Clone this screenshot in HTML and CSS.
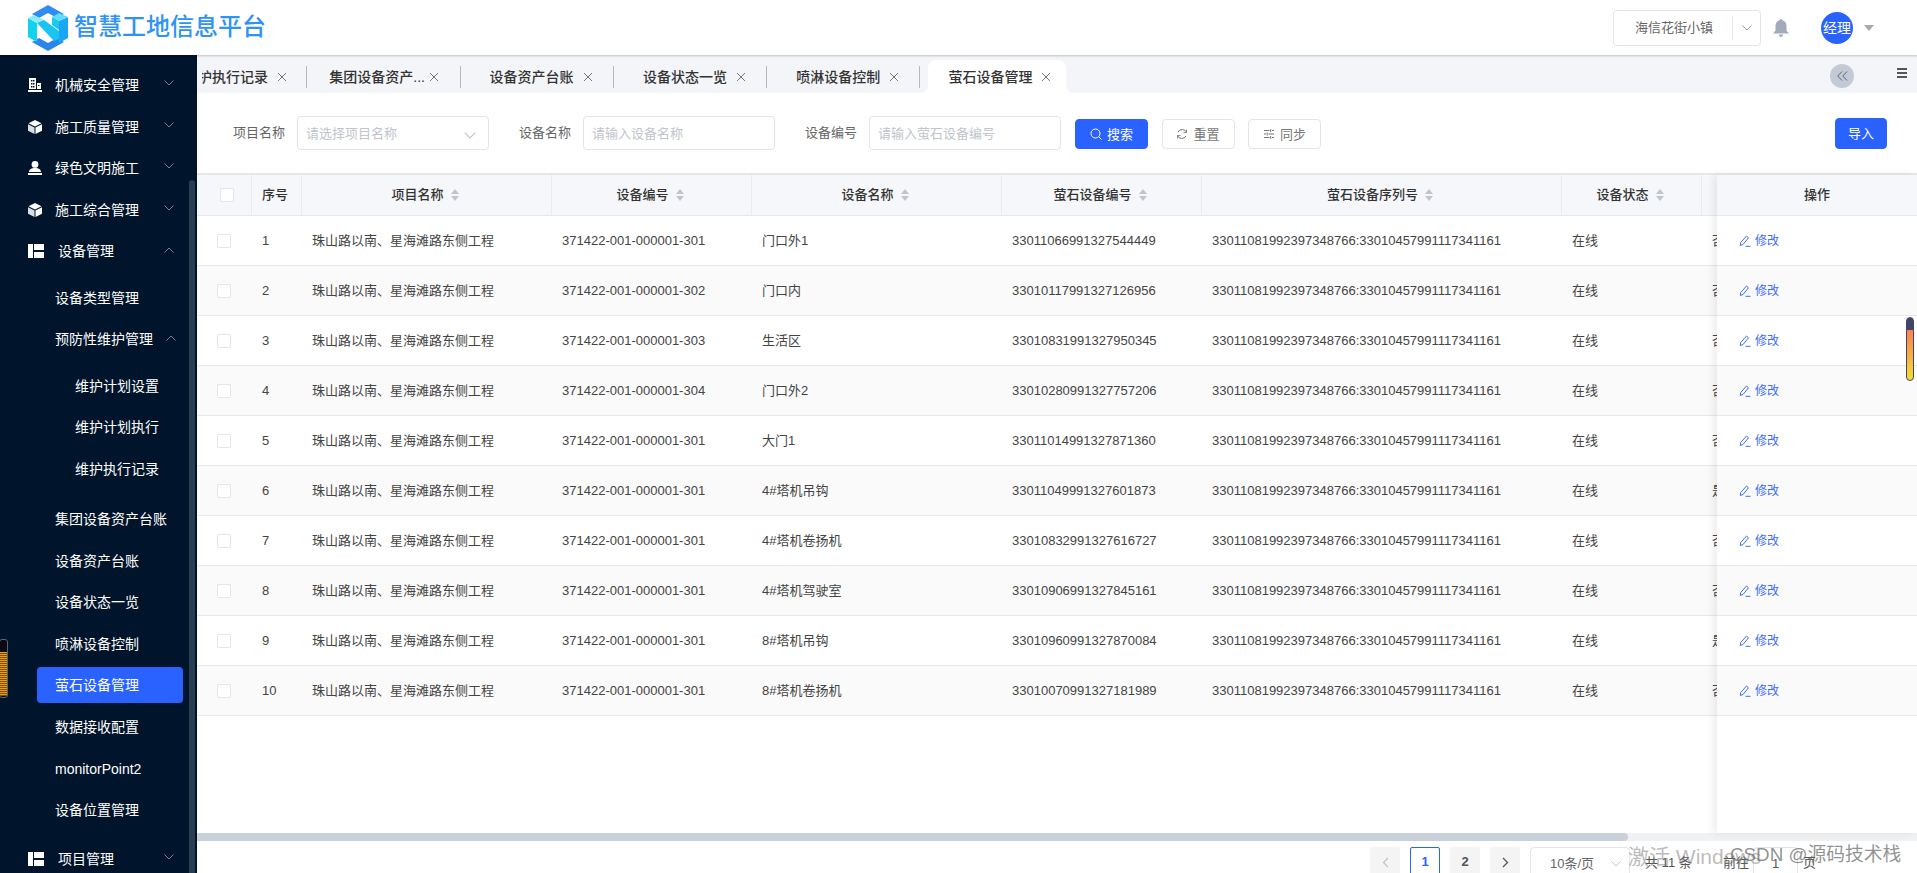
FILE: index.html
```html
<!DOCTYPE html>
<html lang="zh-CN">
<head>
<meta charset="utf-8">
<title>智慧工地信息平台</title>
<link rel="stylesheet" href="styles.css">
</head>
<body>
<svg class="defs" width="0" height="0" aria-hidden="true">
  <symbol id="i-down" viewBox="0 0 10 6"><path d="M.5.5 5 5 9.500.5" fill="none" stroke="currentColor"/></symbol>
  <symbol id="i-up" viewBox="0 0 10 6"><path d="M.5 5.500 5 1l4.500 4.500" fill="none" stroke="currentColor"/></symbol>
  <symbol id="i-x" viewBox="0 0 10 10"><path d="M1 1l8 8M9 1 1 9" fill="none" stroke="currentColor" stroke-width="1"/></symbol>
  <symbol id="i-building" viewBox="0 0 14 14"><path fill="currentColor" d="M1 0h7v11H1zM9 5h4v6H9zM0 12h14v2H0z"/><path fill="#00142b" d="M3 2h1.500v1.500H3zM5 2h1.500v1.500H5zM3 5h1.500v1.500H3zM5 5h1.500v1.500H5zM3 8h1.500v1.500H3zM5 8h1.500v1.500H5zM10 7h1.500v1H10z"/></symbol>
  <symbol id="i-cube" viewBox="0 0 14 14"><path fill="currentColor" d="M7 0l6.500 3.200L7 6.400.5 3.200z"/><path fill="#d8dde6" d="M0 4.200l6.500 3.200V14L0 10.800z"/><path fill="#fff" d="M14 4.200 7.500 7.400V14l6.500-3.200z"/></symbol>
  <symbol id="i-person" viewBox="0 0 14 14"><circle cx="7" cy="3.400" r="3.400" fill="currentColor"/><path fill="currentColor" d="M1 11c0-2.600 2.600-4 6-4s6 1.400 6 4zM0 12h14v2H0z"/></symbol>
  <symbol id="i-panel" viewBox="0 0 16 14"><path fill="currentColor" d="M0 0h5v14H0zM6 0h10v6H6zM6 8h10v6H6z"/></symbol>
  <symbol id="i-sort" viewBox="0 0 8 12"><path fill="currentColor" d="M4 0l4 5H0zM4 12 0 7h8z"/></symbol>
  <symbol id="i-edit" viewBox="0 0 12 12"><path d="M7.500 1 9.500 2.800 4 9.500 1.300 10.500 1.600 7.600z" fill="none" stroke="currentColor"/><path d="M6.500 11.300h5" stroke="currentColor" fill="none"/></symbol>
</svg>

<header class="top">
  <svg class="logo" width="42" height="46" viewBox="0 0 42 46" aria-hidden="true">
    <path fill="#2f8cf2" d="M21 0 37 9 30 13 21 8 12 13 5 9z"/>
    <path fill="#2b86ec" d="M21 46 37 37 30 33 21 38 12 33 5 37z"/>
    <path fill="#13d2ee" d="M1 13 10 18V37L1 32z"/>
    <path fill="#8feaf7" d="M1 13 7 10 17 15 10 18z"/>
    <path fill="#18c4f2" d="M10 18 17 15 32 26V34L27 36z"/>
    <path fill="#1aa6f6" d="M32 16 41 12V33L32 38z"/>
    <path fill="#5fdcf6" d="M25 12 32 8 41 12 32 16z"/>
    <path fill="#1cc8f0" d="M25 12 32 16V25L25 20z"/>
  </svg>
  <span class="brand">智慧工地信息平台</span>
  <div class="project-select">
    <span class="project-name">海信花街小镇</span>
    <span class="project-arrow"><svg width="10" height="6"><use href="#i-down"/></svg></span>
  </div>
  <svg class="bell" width="16" height="18" viewBox="0 0 16 18" aria-hidden="true"><path fill="currentColor" d="M8 0c.8 0 1.300.5 1.400 1.200C12 1.900 13.500 4 13.500 7v4.500L16 14.500H0L2.500 11.500V7c0-3 1.500-5.100 4.100-5.800C6.700.5 7.200 0 8 0zM5.800 15.500h4.400C10 17 9.200 18 8 18s-2-1-2.200-2.500z"/></svg>
  <span class="avatar">经理</span>
  <span class="caret"></span>
</header>

<div class="shell">
  <aside class="side">
    <nav class="nav">
      <a class="item"><svg class="ico" width="14" height="14"><use href="#i-building"/></svg>机械安全管理<svg class="chev" width="10" height="6"><use href="#i-down"/></svg></a>
      <a class="item"><svg class="ico" width="14" height="14"><use href="#i-cube"/></svg>施工质量管理<svg class="chev" width="10" height="6"><use href="#i-down"/></svg></a>
      <a class="item"><svg class="ico" width="14" height="14"><use href="#i-person"/></svg>绿色文明施工<svg class="chev" width="10" height="6"><use href="#i-down"/></svg></a>
      <a class="item"><svg class="ico" width="14" height="14"><use href="#i-cube"/></svg>施工综合管理<svg class="chev" width="10" height="6"><use href="#i-down"/></svg></a>
      <a class="item"><svg class="ico-wide" width="16" height="14"><use href="#i-panel"/></svg>设备管理<svg class="chev chev-up" width="10" height="6"><use href="#i-up"/></svg></a>
      <div class="group">
        <a class="sub">设备类型管理</a>
        <a class="sub">预防性维护管理<svg class="chev chev-up" width="10" height="6"><use href="#i-up"/></svg></a>
        <div class="group group-inner">
          <a class="sub sub2">维护计划设置</a>
          <a class="sub sub2">维护计划执行</a>
          <a class="sub sub2">维护执行记录</a>
        </div>
        <a class="sub">集团设备资产台账</a>
        <a class="sub">设备资产台账</a>
        <a class="sub">设备状态一览</a>
        <a class="sub">喷淋设备控制</a>
        <a class="sub active">萤石设备管理</a>
        <a class="sub">数据接收配置</a>
        <a class="sub">monitorPoint2</a>
        <a class="sub">设备位置管理</a>
      </div>
      <a class="item"><svg class="ico-wide" width="16" height="14"><use href="#i-panel"/></svg>项目管理<svg class="chev" width="10" height="6"><use href="#i-down"/></svg></a>
    </nav>
    <span class="side-thumb"></span>
  </aside>

  <main class="main">
    <div class="tabbar">
      <div class="tabs">
        <div class="tab tab-first"><span class="tab-text">维护执行记录</span><svg class="tab-x" width="10" height="10"><use href="#i-x"/></svg></div>
        <div class="tab tab-second"><span class="tab-text tab-clip">集团设备资产...</span><svg class="tab-x" width="10" height="10"><use href="#i-x"/></svg></div>
        <div class="tab"><span class="tab-text">设备资产台账</span><svg class="tab-x" width="10" height="10"><use href="#i-x"/></svg></div>
        <div class="tab"><span class="tab-text">设备状态一览</span><svg class="tab-x" width="10" height="10"><use href="#i-x"/></svg></div>
        <div class="tab"><span class="tab-text">喷淋设备控制</span><svg class="tab-x" width="10" height="10"><use href="#i-x"/></svg></div>
        <div class="tab tab-active"><span class="tab-text">萤石设备管理</span><svg class="tab-x" width="10" height="10"><use href="#i-x"/></svg></div>
      </div>
      <span class="collapse"><svg width="11" height="10" viewBox="0 0 11 10"><path d="M5 .5.8 5 5 9.500M10 .5 5.800 5 10 9.500" fill="none" stroke="currentColor"/></svg></span>
      <span class="burger"><i></i><i></i><i></i></span>
    </div>

    <form class="filter">
      <label class="field"><span class="field-label">项目名称</span><span class="input input-select"><span class="ph">请选择项目名称</span><svg class="input-arrow" width="12" height="7"><use href="#i-down"/></svg></span></label>
      <label class="field"><span class="field-label">设备名称</span><span class="input"><span class="ph">请输入设备名称</span></span></label>
      <label class="field"><span class="field-label">设备编号</span><span class="input"><span class="ph">请输入萤石设备编号</span></span></label>
      <div class="btns">
        <button type="button" class="btn btn-primary"><svg width="12" height="12" viewBox="0 0 12 12"><circle cx="5.500" cy="5.500" r="4.500" fill="none" stroke="currentColor"/><path d="M9 9l2.500 2.500" stroke="currentColor"/></svg><span class="btn-text">搜索</span></button>
        <button type="button" class="btn"><svg width="12" height="12" viewBox="0 0 12 12"><path d="M1.500 7.500A4.700 4.700 0 0 0 10 8M10.500 4.500A4.700 4.700 0 0 0 2 4" fill="none" stroke="currentColor"/><path d="M10.500 1.500v3h-3M1.500 10.500v-3h3" fill="none" stroke="currentColor" stroke-width=".8"/></svg><span class="btn-text">重置</span></button>
        <button type="button" class="btn"><svg width="12" height="12" viewBox="0 0 12 12"><path d="M1 2.500h5.500M9 2.500h2M1 6h2M5.500 6H11M1 9.500h5.500M9 9.500h2" stroke="currentColor" fill="none"/><path d="M7.700 1v3M4.200 4.500v3M7.700 8v3" stroke="currentColor" fill="none"/></svg><span class="btn-text">同步</span></button>
      </div>
      <button type="button" class="btn btn-primary btn-import"><span class="btn-text">导入</span></button>
    </form>

    <section class="table-area">
      <div class="table-clip">
        <table class="grid">
          <colgroup><col class="c0"><col class="c1"><col class="c2"><col class="c3"><col class="c4"><col class="c5"><col class="c6"><col class="c7"><col class="c8"></colgroup>
          <thead>
            <tr>
              <th class="th-check"><span class="check"></span></th>
              <th class="th-left">序号</th>
              <th><span class="th-in">项目名称<svg class="sort" width="8" height="12"><use href="#i-sort"/></svg></span></th>
              <th><span class="th-in">设备编号<svg class="sort" width="8" height="12"><use href="#i-sort"/></svg></span></th>
              <th><span class="th-in">设备名称<svg class="sort" width="8" height="12"><use href="#i-sort"/></svg></span></th>
              <th><span class="th-in">萤石设备编号<svg class="sort" width="8" height="12"><use href="#i-sort"/></svg></span></th>
              <th><span class="th-in">萤石设备序列号<svg class="sort" width="8" height="12"><use href="#i-sort"/></svg></span></th>
              <th><span class="th-in">设备状态<svg class="sort" width="8" height="12"><use href="#i-sort"/></svg></span></th>
              <th></th>
            </tr>
          </thead>
          <tbody>
            <tr><td class="td-check"><span class="check"></span></td><td>1</td><td>珠山路以南、星海滩路东侧工程</td><td>371422-001-000001-301</td><td>门口外1</td><td>33011066991327544449</td><td>33011081992397348766:33010457991117341161</td><td>在线</td><td>否</td></tr>
            <tr><td class="td-check"><span class="check"></span></td><td>2</td><td>珠山路以南、星海滩路东侧工程</td><td>371422-001-000001-302</td><td>门口内</td><td>33010117991327126956</td><td>33011081992397348766:33010457991117341161</td><td>在线</td><td>否</td></tr>
            <tr><td class="td-check"><span class="check"></span></td><td>3</td><td>珠山路以南、星海滩路东侧工程</td><td>371422-001-000001-303</td><td>生活区</td><td>33010831991327950345</td><td>33011081992397348766:33010457991117341161</td><td>在线</td><td>否</td></tr>
            <tr><td class="td-check"><span class="check"></span></td><td>4</td><td>珠山路以南、星海滩路东侧工程</td><td>371422-001-000001-304</td><td>门口外2</td><td>33010280991327757206</td><td>33011081992397348766:33010457991117341161</td><td>在线</td><td>否</td></tr>
            <tr><td class="td-check"><span class="check"></span></td><td>5</td><td>珠山路以南、星海滩路东侧工程</td><td>371422-001-000001-301</td><td>大门1</td><td>33011014991327871360</td><td>33011081992397348766:33010457991117341161</td><td>在线</td><td>否</td></tr>
            <tr><td class="td-check"><span class="check"></span></td><td>6</td><td>珠山路以南、星海滩路东侧工程</td><td>371422-001-000001-301</td><td>4#塔机吊钩</td><td>33011049991327601873</td><td>33011081992397348766:33010457991117341161</td><td>在线</td><td>是</td></tr>
            <tr><td class="td-check"><span class="check"></span></td><td>7</td><td>珠山路以南、星海滩路东侧工程</td><td>371422-001-000001-301</td><td>4#塔机卷扬机</td><td>33010832991327616727</td><td>33011081992397348766:33010457991117341161</td><td>在线</td><td>否</td></tr>
            <tr><td class="td-check"><span class="check"></span></td><td>8</td><td>珠山路以南、星海滩路东侧工程</td><td>371422-001-000001-301</td><td>4#塔机驾驶室</td><td>33010906991327845161</td><td>33011081992397348766:33010457991117341161</td><td>在线</td><td>否</td></tr>
            <tr><td class="td-check"><span class="check"></span></td><td>9</td><td>珠山路以南、星海滩路东侧工程</td><td>371422-001-000001-301</td><td>8#塔机吊钩</td><td>33010960991327870084</td><td>33011081992397348766:33010457991117341161</td><td>在线</td><td>是</td></tr>
            <tr><td class="td-check"><span class="check"></span></td><td>10</td><td>珠山路以南、星海滩路东侧工程</td><td>371422-001-000001-301</td><td>8#塔机卷扬机</td><td>33010070991327181989</td><td>33011081992397348766:33010457991117341161</td><td>在线</td><td>否</td></tr>
          </tbody>
        </table>
      </div>
      <div class="fixed">
        <div class="fixed-head">操作</div>
        <div class="fixed-row"><a class="edit"><svg width="12" height="12"><use href="#i-edit"/></svg>修改</a></div>
        <div class="fixed-row"><a class="edit"><svg width="12" height="12"><use href="#i-edit"/></svg>修改</a></div>
        <div class="fixed-row"><a class="edit"><svg width="12" height="12"><use href="#i-edit"/></svg>修改</a></div>
        <div class="fixed-row"><a class="edit"><svg width="12" height="12"><use href="#i-edit"/></svg>修改</a></div>
        <div class="fixed-row"><a class="edit"><svg width="12" height="12"><use href="#i-edit"/></svg>修改</a></div>
        <div class="fixed-row"><a class="edit"><svg width="12" height="12"><use href="#i-edit"/></svg>修改</a></div>
        <div class="fixed-row"><a class="edit"><svg width="12" height="12"><use href="#i-edit"/></svg>修改</a></div>
        <div class="fixed-row"><a class="edit"><svg width="12" height="12"><use href="#i-edit"/></svg>修改</a></div>
        <div class="fixed-row"><a class="edit"><svg width="12" height="12"><use href="#i-edit"/></svg>修改</a></div>
        <div class="fixed-row"><a class="edit"><svg width="12" height="12"><use href="#i-edit"/></svg>修改</a></div>
      </div>
    </section>

    <div class="hscroll"><span class="hthumb"></span></div>

    <div class="pager">
      <span class="pg pg-disabled"><svg width="7" height="11" viewBox="0 0 7 11"><path d="M6 1 1.500 5.500 6 10" fill="none" stroke="currentColor" stroke-width="1.300"/></svg></span>
      <span class="pg pg-on">1</span>
      <span class="pg">2</span>
      <span class="pg"><svg width="7" height="11" viewBox="0 0 7 11"><path d="M1 1l4.500 4.500L1 10" fill="none" stroke="currentColor" stroke-width="1.300"/></svg></span>
      <span class="pg-size">10条/页<svg width="10" height="6"><use href="#i-down"/></svg></span>
      <span class="pg-total">共 11 条</span>
      <span class="pg-goto">前往</span>
      <span class="pg-input">1</span>
      <span class="pg-unit">页</span>
    </div>
  </main>
</div>

<span class="gauge-right"><i></i></span>
<span class="gauge-left"><i></i></span>
<span class="mark-win">激活 Windows</span>
<span class="mark-csdn">CSDN @源码技术栈</span>
</body>
</html>
```

FILE: styles.css
```css
* { box-sizing: border-box; }
html, body { margin: 0; height: 100%; }
body {
  width: 1917px;
  height: 873px;
  overflow: hidden;
  position: relative;
  display: flex;
  flex-direction: column;
  background: #fff;
  color: #444;
  font-family: "Liberation Sans", "Noto Sans CJK SC", sans-serif;
  font-size: 13px;
  line-height: 18px;
}
.defs { position: absolute; }
svg { display: block; flex: none; }

/* top bar */
.top {
  height: 55px;
  flex: none;
  display: flex;
  align-items: center;
  padding-left: 27px;
  background: #fff;
  position: relative;
  z-index: 2;
  box-shadow: 0 1px 2px rgba(0, 0, 0, .22);
}
.logo { margin-top: 1px; }
.brand {
  margin-left: 5px;
  margin-top: -1px;
  font-size: 24px;
  line-height: 30px;
  font-weight: 500;
  color: #2e93f5;
}
.project-select {
  margin-left: auto;
  width: 148px;
  height: 36px;
  display: flex;
  align-items: center;
  border: 1px solid #e2e4ea;
  border-radius: 4px;
  color: #666;
}
.project-name { width: 118px; padding-left: 21px; }
.project-arrow {
  height: 24px;
  flex: 1;
  border-left: 1px solid #e8e8e8;
  display: flex;
  align-items: center;
  justify-content: center;
  color: #999;
}
.bell { margin-left: 12px; color: #a3abbb; }
.avatar {
  margin-left: 32px;
  width: 32px;
  height: 32px;
  border-radius: 50%;
  background: #2962ff;
  color: #fff;
  font-size: 14px;
  line-height: 32px;
  text-align: center;
}
.caret {
  margin-left: 11px;
  margin-right: 43px;
  border: 5px solid transparent;
  border-top: 6px solid #a8a8a8;
  border-bottom: 0;
}

/* shell */
.shell { flex: 1; min-height: 0; display: flex; }

/* sidebar */
.side {
  width: 197px;
  flex: none;
  background: #00142b;
  position: relative;
  overflow: hidden;
  color: #fff;
  font-size: 14px;
}
.nav {
  display: flex;
  flex-direction: column;
  gap: 5.6px;
  padding-top: 12px;
}
.group {
  display: flex;
  flex-direction: column;
  gap: 5.6px;
  padding: 4.700px 0 7.400px;
}
.group-inner { padding-bottom: 8.700px; }
.item {
  height: 36px;
  flex: none;
  display: flex;
  align-items: center;
  padding: 0 23px 0 28px;
}
.ico { margin-right: 13px; color: #fff; }
.ico-wide { margin-right: 14px; color: #fff; }
.chev { margin-left: auto; color: #76828f; transform: translateY(-2px); }
.chev-up { transform: translateY(-1px); }
.sub {
  height: 36px;
  flex: none;
  margin: 0 14px 0 37px;
  padding: 0 7px 0 18px;
  display: flex;
  align-items: center;
  border-radius: 4px;
}
.sub2 { padding-left: 38px; }
.active { background: #2962ff; }
.side-thumb {
  position: absolute;
  right: 2px;
  top: 125px;
  bottom: 0;
  width: 6px;
  background: #2b3d50;
  border-radius: 3px 3px 0 0;
}

/* main */
.main { flex: 1; min-width: 0; display: flex; flex-direction: column; }
.tabbar {
  height: 38px;
  flex: none;
  display: flex;
  align-items: flex-end;
  background: #f4f5f8;
  padding-left: 5px;
  position: relative;
}
.tabs {
  width: 1000px;
  display: flex;
  overflow: hidden;
  padding-right: 20px;
  height: 33px;
}
.tab {
  position: relative;
  width: 153.300px;
  height: 33px;
  flex: none;
  display: flex;
  align-items: center;
  padding-left: 29px;
  font-size: 14px;
  font-weight: 500;
  color: #333;
}
.tab::after {
  content: "";
  position: absolute;
  right: 0;
  top: 6px;
  height: 22px;
  width: 1px;
  background: #b4b7bc;
}
.tab-first { margin-left: -48px; padding-left: 30px; }
.tab-second { padding-left: 22px; }
.tab-text { width: 84px; white-space: nowrap; }
.tab-clip { width: 97px; }
.tab-second .tab-x { margin-left: 3px; }
.tab-x { margin-left: 9px; color: #777; }
.tab-active {
  width: 137.500px;
  margin-left: 8px;
  padding-left: 20px;
  background: #fff;
  border-radius: 8px 8px 0 0;
}
.tab-active::after {
  right: -8px;
  top: auto;
  bottom: 0;
  width: 8px;
  height: 8px;
  background: radial-gradient(circle at 100% 0, #f4f5f8 8px, #fff 8.500px);
}
.tab-active::before {
  content: "";
  position: absolute;
  left: -8px;
  bottom: 0;
  width: 8px;
  height: 8px;
  background: radial-gradient(circle at 0 0, #f4f5f8 8px, #fff 8.500px);
}
.collapse {
  position: absolute;
  left: 1633px;
  top: 9px;
  width: 24px;
  height: 24px;
  border-radius: 50%;
  background: #c3cad6;
  color: #5d6775;
  display: flex;
  align-items: center;
  justify-content: center;
}
.burger {
  position: absolute;
  left: 1700px;
  top: 13px;
  width: 10px;
  display: flex;
  flex-direction: column;
  gap: 2px;
}
.burger i { display: block; height: 2px; background: #555; }

/* filter */
.filter {
  height: 80px;
  flex: none;
  display: flex;
  align-items: center;
  padding: 0 30px 0 36px;
}
.field { display: flex; align-items: center; margin-right: 30px; }
.field:nth-child(3) { margin-right: 14px; }
.field-label { width: 52px; margin-right: 12px; color: #666; white-space: nowrap; }
.input {
  width: 192px;
  height: 34px;
  border: 1px solid #e2e4ea;
  border-radius: 4px;
  display: flex;
  align-items: center;
  padding: 2px 8px 0;
  background: #fff;
}
.ph { color: #c0c4cc; }
.input-arrow { margin-left: auto; margin-right: 4px; margin-top: 2px; color: #c0c4cc; }
.btns { display: flex; gap: 13.500px; margin-top: 1px; }
.btn {
  height: 30px;
  width: 73px;
  padding: 0;
  border: 1px solid #e2e4ea;
  border-radius: 4px;
  background: #fff;
  color: #777;
  font: inherit;
  display: flex;
  align-items: center;
  justify-content: center;
  gap: 5px;
}
.btn-text { margin-top: 2px; }
.btn-primary { background: #2962ff; border-color: #2962ff; color: #fff; }
.btn-import { margin-left: auto; width: 52px; height: 31px; }

/* table */
.table-area {
  flex: 1;
  min-height: 0;
  display: flex;
  border-top: 2px solid #e8e8ea;
}
.table-clip { flex: 1; min-width: 0; overflow: hidden; }
.grid {
  width: 1705px;
  table-layout: fixed;
  border-collapse: separate;
  border-spacing: 0;
}
.c0 { width: 55px; }
.c1 { width: 50px; }
.c2 { width: 250px; }
.c3 { width: 200px; }
.c4 { width: 250px; }
.c5 { width: 200px; }
.c6 { width: 360px; }
.c7 { width: 140px; }
.c8 { width: 200px; }
.grid th {
  height: 41px;
  padding: 0 10px;
  background: #f5f7fa;
  border-bottom: 1px solid #e8e8e8;
  border-right: 1px solid #e9ebef;
  font-weight: 500;
  color: #333;
  text-align: center;
}
.grid th:first-child { padding: 0 0 0 23px; text-align: left; }
.grid th.th-left { text-align: left; }
.th-in { display: inline-flex; align-items: center; gap: 7px; }
.sort { color: #c0c4cc; margin-right: 3px; }
.grid td {
  height: 50px;
  padding: 0 10px;
  border-bottom: 1px solid #e8e8e8;
  white-space: nowrap;
}
.grid td:first-child { padding: 0 0 0 20px; }
.grid tbody tr:nth-child(even) td { background: #fafafa; }
.check {
  display: block;
  width: 14px;
  height: 14px;
  border: 1px solid #e2e4e8;
  border-radius: 2px;
  background: #fff;
}

/* fixed column */
.fixed {
  width: 200px;
  flex: none;
  position: relative;
  background: #fff;
  box-shadow: -4px 0 8px rgba(0, 0, 0, .07);
}
.fixed-head {
  height: 41px;
  line-height: 40px;
  text-align: center;
  font-weight: 500;
  color: #333;
  background: #f5f7fa;
  border-bottom: 1px solid #e8e8e8;
}
.fixed-row {
  height: 50px;
  display: flex;
  align-items: center;
  padding-left: 22px;
  border-bottom: 1px solid #e8e8e8;
}
.fixed-row:nth-child(odd) { background: #fafafa; }
.edit {
  display: flex;
  align-items: center;
  gap: 4px;
  font-size: 12px;
  color: #3f6cf6;
}

/* horizontal scrollbar */
.hscroll { height: 8px; flex: none; background: #f0f1f3; }
.hthumb { display: block; width: 1431px; height: 8px; background: #c8d1da; border-radius: 0 4px 4px 0; }

/* pager */
.pager {
  height: 32px;
  flex: none;
  overflow: hidden;
  display: flex;
  align-items: flex-start;
  padding: 6px 0 0 1173px;
  color: #555;
}
.pg {
  width: 30px;
  height: 30px;
  margin-right: 10px;
  flex: none;
  border-radius: 2px;
  background: #f4f4f5;
  display: flex;
  align-items: center;
  justify-content: center;
  font-weight: 700;
  font-size: 13px;
}
.pg-disabled { color: #c0c4cc; }
.pg-on { background: #fff; border: 1px solid #2962ff; color: #2962ff; }
.pg-size {
  width: 100px;
  height: 33px;
  flex: none;
  border: 1px solid #e2e4ea;
  border-radius: 4px;
  display: flex;
  align-items: center;
  padding: 0 8px 0 19px;
  justify-content: space-between;
  color: #666;
}
.pg-size svg { color: #c0c4cc; }
.pg-total { margin-left: 15px; margin-top: 7px; width: 70px; white-space: nowrap; }
.pg-goto { margin-left: 8px; margin-top: 7px; width: 30px; white-space: nowrap; }
.pg-input {
  width: 45px;
  height: 33px;
  flex: none;
  border: 1px solid #e2e4ea;
  border-radius: 4px;
  text-align: center;
  line-height: 31px;
}
.pg-unit { margin-left: 5px; margin-top: 7px; }

/* overlays */
.gauge-right {
  position: absolute;
  left: 1906px;
  top: 317px;
  width: 8px;
  height: 64px;
  border: 1px solid #44446a;
  border-radius: 4px;
  background: linear-gradient(#44446a 0 12px, #ff7f50 12px, #f0e030);
}
.gauge-left {
  position: absolute;
  left: -1px;
  top: 639px;
  width: 9px;
  height: 59px;
  border: 1px solid #5a6470;
  border-radius: 3px;
  background: #0a0a10;
  padding: 12px 0 1px;
}
.gauge-left i {
  display: block;
  height: 100%;
  background: repeating-linear-gradient(#f39c18 0 1px, #7a4d10 1px 2px);
}
.mark-win {
  position: absolute;
  left: 1628px;
  top: 844px;
  font-size: 21px;
  line-height: 26px;
  color: rgba(120, 120, 120, .5);
  white-space: nowrap;
}
.mark-csdn {
  position: absolute;
  left: 1730px;
  top: 842px;
  font-size: 18.800px;
  line-height: 26px;
  color: rgba(110, 110, 110, .75);
  white-space: nowrap;
}
```
